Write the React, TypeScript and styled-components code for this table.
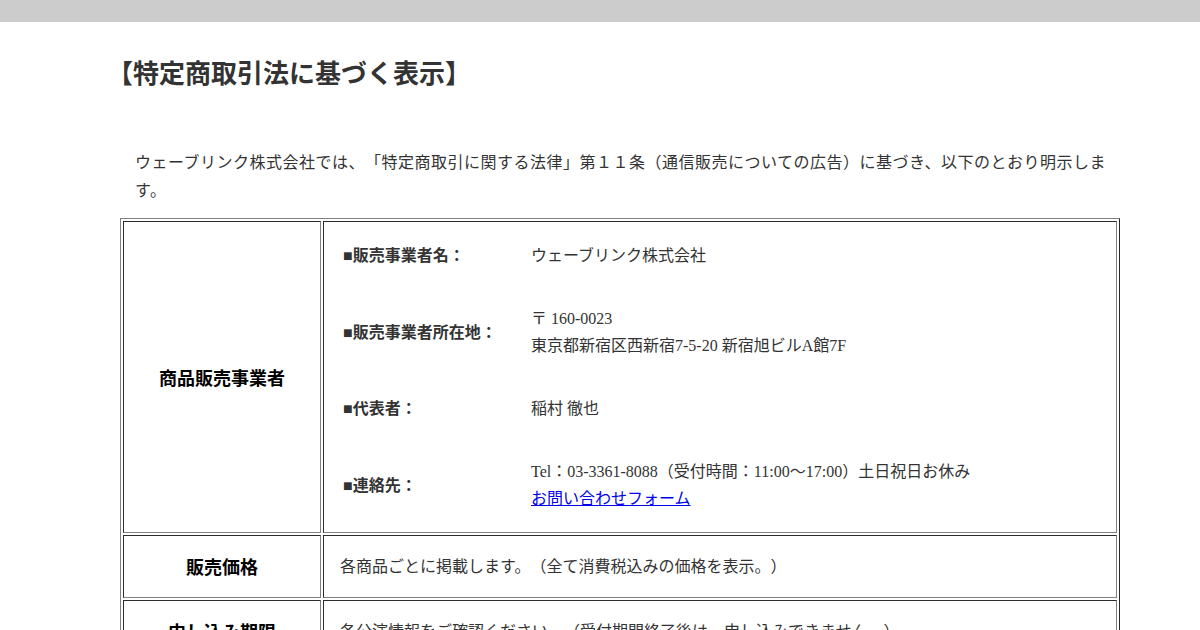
import React from "react";
import styled, { createGlobalStyle } from "styled-components";

const GlobalStyle = createGlobalStyle`
  html, body { margin: 0; padding: 0; background: #fff; }
  body {
    font-family: "Noto Sans CJK JP", "Noto Sans", sans-serif;
    color: #333;
    text-spacing-trim: space-all;
  }
`;

const TopBar = styled.div`
  height: 22px;
  background: #cccccc;
`;

const Main = styled.main`
  width: 1000px;
  margin-left: 120px;
`;

const Title = styled.h2`
  margin: 32px 0 0;
  font-size: 26px;
  line-height: 36px;
  font-weight: bold;
  color: #333;
  text-spacing-trim: trim-start;
`;

const Intro = styled.p`
  margin: 57px 0 0;
  padding: 0 0 0 15px;
  font-size: 16px;
  line-height: 28px;
  letter-spacing: 0.5px;
  color: #333;
`;

const Table = styled.table`
  margin-top: 15px;
  width: 1000px;
  border: 1px outset gray;
  border-collapse: separate;
  border-spacing: 2px;
  font-family: "Liberation Serif", "Noto Sans CJK JP", serif;
`;

const HeadCell = styled.th`
  width: 198px;
  box-sizing: border-box;
  border: 1px inset gray;
  padding: 17px 8px;
  font-family: "Noto Sans CJK JP", sans-serif;
  font-size: 18px;
  line-height: 27px;
  font-weight: bold;
  color: #000;
  text-align: center;
  vertical-align: middle;
`;

const BodyCell = styled.td<{ $dense?: boolean }>`
  border: 1px inset gray;
  padding: ${(p) => (p.$dense ? "20px 16px 20px 19px" : "17px 16px")};
  font-size: 16px;
  line-height: 27px;
  color: #333;
  text-align: left;
  vertical-align: middle;
`;

const InfoGrid = styled.div`
  display: grid;
  grid-template-columns: 188px 1fr;
  row-gap: 36px;
  align-items: center;
`;

const InfoLabel = styled.div`
  font-weight: bold;
  color: #333;
`;

const InfoValue = styled.div`
  color: #333;
`;

const FormLink = styled.a`
  color: #0000ee;
  text-decoration: underline;
`;

const rows: { label: string; value: React.ReactNode }[] = [
  { label: "■販売事業者名：", value: "ウェーブリンク株式会社" },
  {
    label: "■販売事業者所在地：",
    value: (
      <>
        〒 160-0023
        <br />
        東京都新宿区西新宿7-5-20 新宿旭ビルA館7F
      </>
    ),
  },
  { label: "■代表者：", value: "稲村 徹也" },
  {
    label: "■連絡先：",
    value: (
      <>
        Tel：03-3361-8088（受付時間：11:00～17:00）土日祝日お休み
        <br />
        <FormLink href="#">お問い合わせフォーム</FormLink>
      </>
    ),
  },
];

export default function App() {
  return (
    <>
      <GlobalStyle />
      <TopBar />
      <Main>
        <Title>【特定商取引法に基づく表示】</Title>
        <Intro>
          ウェーブリンク株式会社では、「特定商取引に関する法律」第１１条（通信販売についての広告）に基づき、以下のとおり明示します。
        </Intro>
        <Table>
          <tbody>
            <tr>
              <HeadCell>商品販売事業者</HeadCell>
              <BodyCell $dense>
                <InfoGrid>
                  {rows.map((r) => (
                    <React.Fragment key={r.label}>
                      <InfoLabel>{r.label}</InfoLabel>
                      <InfoValue>{r.value}</InfoValue>
                    </React.Fragment>
                  ))}
                </InfoGrid>
              </BodyCell>
            </tr>
            <tr>
              <HeadCell>販売価格</HeadCell>
              <BodyCell>各商品ごとに掲載します。（全て消費税込みの価格を表示。）</BodyCell>
            </tr>
            <tr>
              <HeadCell>申し込み期限</HeadCell>
              <BodyCell>各公演情報をご確認ください。（受付期間終了後は、申し込みできません。）</BodyCell>
            </tr>
          </tbody>
        </Table>
      </Main>
    </>
  );
}
